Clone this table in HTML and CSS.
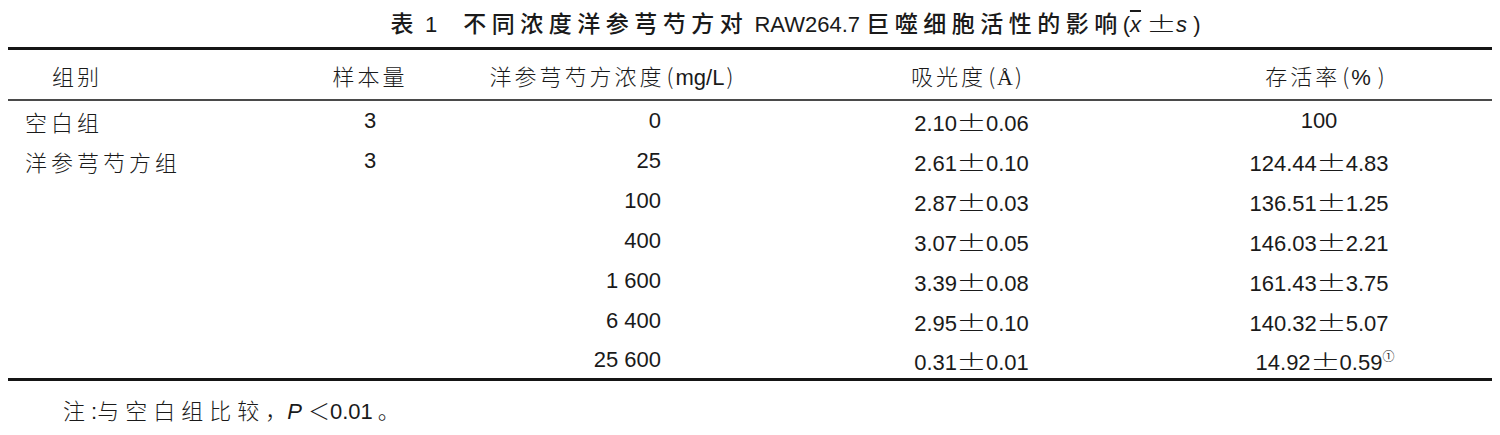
FILE: index.html
```html
<!DOCTYPE html>
<html lang="zh-CN">
<head>
  <meta charset="UTF-8">
  <meta name="viewport" content="width=device-width, initial-scale=1.0">
  <title>表1 不同浓度洋参芎芍方对RAW264.7巨噬细胞活性的影响</title>
  <link rel="stylesheet" href="styles.css">
</head>
<body>
  <h1 class="caption">
    <span class="zh">表</span> 1<span class="gap"></span><span class="zh">不同浓度洋参芎芍方对</span> RAW264.7 <span class="zh">巨噬细胞活性的影响</span>(<i class="mean">x</i> <span class="pm">±</span><i>s</i> )
  </h1>

  <table class="tbl">
    <colgroup>
      <col class="w1"><col class="w2"><col class="w3"><col class="w4"><col class="w5">
    </colgroup>
    <thead>
      <tr>
        <th class="c1"><span class="zh">组别</span></th>
        <th><span class="zh">样本量</span></th>
        <th><span class="zh">洋参芎芍方浓度</span><span class="par">(</span>mg/L<span class="par">)</span></th>
        <th><span class="zh">吸光度</span><span class="par">(</span><span class="serif">Å</span><span class="par">)</span></th>
        <th><span class="zh">存活率</span><span class="par">(</span>%<span class="par"> )</span></th>
      </tr>
    </thead>
    <tbody>
      <tr>
        <td class="c1"><span class="zh">空白组</span></td>
        <td class="c2">3</td>
        <td class="c3">0</td>
        <td class="c4">2.10<span class="pm">±</span>0.06</td>
        <td class="c5">100</td>
      </tr>
      <tr>
        <td class="c1"><span class="zh">洋参芎芍方组</span></td>
        <td class="c2">3</td>
        <td class="c3">25</td>
        <td class="c4">2.61<span class="pm">±</span>0.10</td>
        <td class="c5">124.44<span class="pm">±</span>4.83</td>
      </tr>
      <tr>
        <td class="c1"></td>
        <td class="c2"></td>
        <td class="c3">100</td>
        <td class="c4">2.87<span class="pm">±</span>0.03</td>
        <td class="c5">136.51<span class="pm">±</span>1.25</td>
      </tr>
      <tr>
        <td class="c1"></td>
        <td class="c2"></td>
        <td class="c3">400</td>
        <td class="c4">3.07<span class="pm">±</span>0.05</td>
        <td class="c5">146.03<span class="pm">±</span>2.21</td>
      </tr>
      <tr>
        <td class="c1"></td>
        <td class="c2"></td>
        <td class="c3">1 600</td>
        <td class="c4">3.39<span class="pm">±</span>0.08</td>
        <td class="c5">161.43<span class="pm">±</span>3.75</td>
      </tr>
      <tr>
        <td class="c1"></td>
        <td class="c2"></td>
        <td class="c3">6 400</td>
        <td class="c4">2.95<span class="pm">±</span>0.10</td>
        <td class="c5">140.32<span class="pm">±</span>5.07</td>
      </tr>
      <tr>
        <td class="c1"></td>
        <td class="c2"></td>
        <td class="c3">25 600</td>
        <td class="c4">0.31<span class="pm">±</span>0.01</td>
        <td class="c5">14.92<span class="pm">±</span>0.59<sup class="ref">①</sup></td>
      </tr>
    </tbody>
  </table>

  <p class="note"><span class="zh">注</span>:<span class="zh">与空白组比较</span><span class="cjk">，</span><i>P</i> <span class="cjk">＜</span>0.01<span class="cjk stop">。</span></p>
</body>
</html>
```

FILE: styles.css
```css
body {
  margin: 8px;
  background: #fff;
  color: #1a1a1a;
  font-family: "Liberation Sans", "Noto Sans CJK SC", sans-serif;
}
.zh, .cjk { font-family: "Noto Sans CJK SC", sans-serif; font-weight: 300; }

/* caption */
.caption {
  margin: 0 0 11px;
  padding-left: 91px;
  height: 28px;
  line-height: 28px;
  font-size: 22px;
  font-weight: normal;
  text-align: center;
  white-space: nowrap;
}
.caption .zh { font-size: 23px; letter-spacing: 5.5px; font-weight: 500; }
.caption .gap { display: inline-block; width: 26px; }
.caption .mean { text-decoration: overline; }

/* table */
.tbl {
  width: 100%;
  border-collapse: collapse;
  table-layout: fixed;
  border-top: 3px solid #151515;
  border-bottom: 3px solid #151515;
  font-size: 22px;
}
.w1 { width: 282px; }
.w2 { width: 160px; }
.w3 { width: 325px; }
.w4 { width: 385px; }
.w5 { width: 332px; }

.tbl thead tr { border-bottom: 2px solid #4a4a4a; }
.tbl th {
  height: 49px;
  padding: 0;
  font-weight: normal;
  text-align: center;
  white-space: nowrap;
}
.tbl th .zh { letter-spacing: 3px; }
.tbl th.c1 { text-align: left; padding-left: 44px; }
.tbl .par { font-family: "Noto Sans CJK SC", sans-serif; font-weight: 300; margin: 0 2px; }
.tbl .serif { font-family: "Liberation Serif", serif; }

.tbl td { height: 40px; padding: 0; white-space: nowrap; }
.tbl tbody tr:last-child td { height: 37px; }
.tbl td .zh { letter-spacing: 4px; }
.tbl td.c1 { text-align: left; padding-left: 17px; }
.tbl td.c2 { text-align: center; }
.tbl td.c3 { text-align: right; padding-right: 114px; }
.tbl td.c4 { text-align: center; padding-left: 8px; }
.tbl td.c5 { text-align: center; padding-right: 14px; }

.pm {
  display: inline-block;
  width: 29px;
  text-align: center;
  font-family: "Noto Sans CJK SC", sans-serif;
  font-weight: 300;
  font-style: normal;
  transform: scaleX(1.4);
}
.ref {
  font-size: 12px;
  margin-right: -12px;
  vertical-align: 9px;
  line-height: 0;
}

/* note */
.note {
  margin: 13px 0 0;
  padding-left: 55px;
  font-size: 22px;
  line-height: 30px;
}
.note .zh { letter-spacing: 6px; }
.note .stop { margin-left: 5px; }
```
